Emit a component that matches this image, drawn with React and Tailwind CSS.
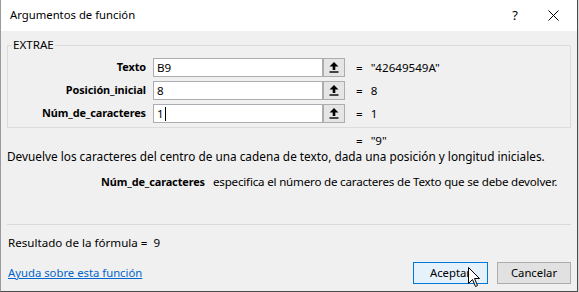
import React from "react";

const font = { fontFamily: '"Segoe UI", "Noto Sans", "Open Sans", sans-serif' };

function UpButton() {
  return (
    <div className="w-[22px] h-[19px] border border-[#adadad] bg-[#e5e5e5] flex items-center justify-center">
      <svg width="10" height="11" viewBox="0 0 10 11">
        <path d="M5 0 L9.5 4.5 L6.3 4.5 L6.3 8 L3.7 8 L3.7 4.5 L0.5 4.5 Z" fill="#000" />
        <rect x="0.5" y="9.3" width="9" height="1.4" fill="#000" />
      </svg>
    </div>
  );
}

function Row({ label, value, result, caret }) {
  return (
    <div className="flex items-center h-[19px]">
      <div className="w-[138px] text-right font-bold text-[10.9px] tracking-[-0.1px] whitespace-nowrap">{label}</div>
      <div className="ml-[7px] w-[170px] h-[19px] border border-[#abadb3] bg-white flex items-center pl-[3px] text-[11.6px]">
        {value}
        {caret && <span className="inline-block w-[1px] h-[14px] bg-black ml-[1px]" />}
      </div>
      <UpButton />
      <div className="ml-[11px] text-[11.6px]">=</div>
      <div className="ml-[8px] text-[11.6px]">{result}</div>
    </div>
  );
}

export default function App() {
  return (
    <div className="w-[579px] h-[292px] bg-[#d8d8d8] relative" style={font}>
      <div className="w-[578px] h-[292px] bg-[#f0f0f0] border-l border-l-[#9a9a9a] border-r border-r-[#4a4a4a] border-b border-b-[#4a4a4a] flex flex-col text-[#000]">
        {/* title bar */}
        <div className="h-[31px] bg-white flex items-center pl-[9px] shrink-0">
          <div className="text-[11.3px] flex-1">Argumentos de función</div>
          <div className="w-[40px] text-center text-[13px]">?</div>
          <div className="w-[36px] flex items-center justify-center mr-[6px]">
            <svg width="11" height="11" viewBox="0 0 11 11">
              <path d="M0.5 0.5 L10.5 10.5 M10.5 0.5 L0.5 10.5" stroke="#000" strokeWidth="1" />
            </svg>
          </div>
        </div>
        {/* group */}
        <fieldset className="mx-[6px] mt-[7px] border border-[#dcdcdc] pb-[4px] pt-[6px]">
          <legend className="ml-[4px] px-[1px] text-[11.6px] leading-[14px]">EXTRAE</legend>
          <div className="flex flex-col gap-[4px]">
            <Row label="Texto" value="B9" result={'"42649549A"'} />
            <Row label="Posición_inicial" value="8" result="8" />
            <Row label="Núm_de_caracteres" value="1" result="1" caret />
          </div>
        </fieldset>
        <div className="flex text-[11.6px] mt-[5px] h-[16px] items-center">
          <div className="ml-[355px]">=</div>
          <div className="ml-[8px]">"9"</div>
        </div>
        <div className="text-[11.8px] ml-[6px] h-[16px] flex items-center whitespace-nowrap">
          Devuelve los caracteres del centro de una cadena de texto, dada una posición y longitud iniciales.
        </div>
        <div className="flex text-[11.6px] mt-[9px] h-[16px] items-center whitespace-nowrap">
          <div className="w-[204px] text-right font-bold text-[10.9px] tracking-[-0.1px]">Núm_de_caracteres</div>
          <div className="ml-[8px] tracking-[-0.2px]">especifica el número de caracteres de Texto que se debe devolver.</div>
        </div>
        <div className="mx-[6px] mt-[34px] h-[1px] bg-[#dadada]" />
        <div className="text-[11.6px] ml-[7px] mt-[10px] h-[16px] flex items-center">
          Resultado de la fórmula = <span className="ml-[6px]">9</span>
        </div>
        <div className="flex items-center mt-[11px] h-[22px]">
          <a className="ml-[7px] text-[11.3px] text-[#0066cc] underline flex-1" href="#">Ayuda sobre esta función</a>
          <button className="w-[75px] h-[22px] border border-[#0078d7] bg-[#e5f1fb] text-[11.3px] mr-[9px]">Aceptar</button>
          <button className="w-[74px] h-[22px] border border-[#adadad] bg-[#e1e1e1] text-[11.3px] mr-[6px]">Cancelar</button>
        </div>
      </div>
      <svg className="absolute left-[468px] top-[267px]" width="13" height="21" viewBox="0 0 13 21">
        <path d="M0.5 0.5 L0.5 16.5 L4.5 12.5 L7.5 19.5 L9.5 18.5 L6.5 11.5 L11.5 11.5 Z" fill="#fff" stroke="#000" strokeWidth="1" strokeLinejoin="miter" />
      </svg>
    </div>
  );
}
